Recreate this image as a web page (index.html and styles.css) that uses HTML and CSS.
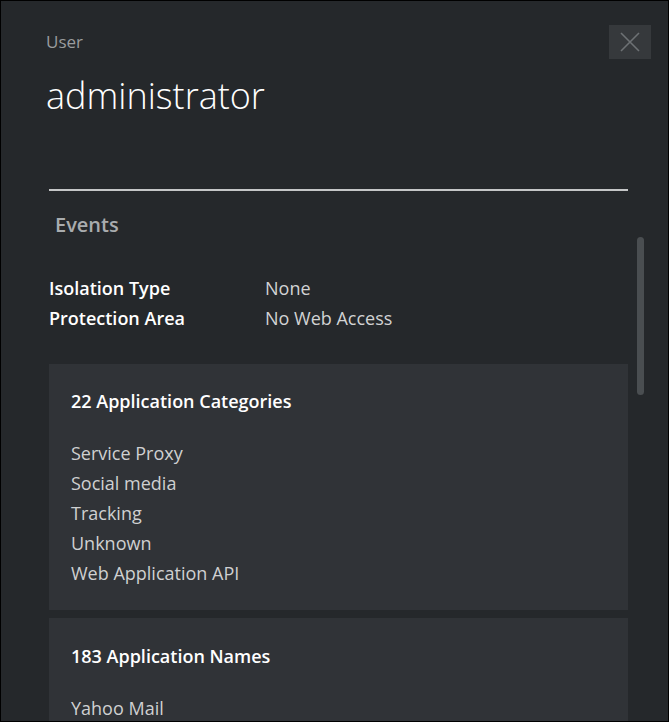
FILE: index.html
```html
<!DOCTYPE html>
<html lang="en">
<head>
<meta charset="utf-8">
<title>User administrator</title>
<link rel="stylesheet" href="styles.css">
</head>
<body>
<div class="panel">
  <header class="header">
    <div class="header-text">
      <div class="kicker">User</div>
      <h1 class="title">administrator</h1>
    </div>
    <button class="close" aria-label="Close">
      <svg width="20" height="20" viewBox="0 0 20 20"><path d="M1 1 L19 19 M19 1 L1 19" stroke="#6d7174" stroke-width="1.6" fill="none"/></svg>
    </button>
  </header>
  <div class="divider"></div>
  <div class="body">
    <div class="content">
      <h2 class="section">Events</h2>
      <dl class="props">
        <div class="prop"><dt>Isolation Type</dt><dd>None</dd></div>
        <div class="prop"><dt>Protection Area</dt><dd>No Web Access</dd></div>
      </dl>
      <section class="card">
        <h3 class="card-title">22 Application Categories</h3>
        <ul class="list">
          <li>Service Proxy</li>
          <li>Social media</li>
          <li>Tracking</li>
          <li>Unknown</li>
          <li>Web Application API</li>
        </ul>
      </section>
      <section class="card">
        <h3 class="card-title">183 Application Names</h3>
        <ul class="list">
          <li>Yahoo Mail</li>
        </ul>
      </section>
    </div>
    <div class="scrollbar"><div class="thumb"></div></div>
  </div>
</div>
</body>
</html>
```

FILE: styles.css
```css
* { box-sizing: border-box; }
html, body { margin: 0; padding: 0; background: #25282b; }
body { font-family: "Open Sans", "Noto Sans", sans-serif; }

.panel {
  width: 669px;
  height: 722px;
  border: 1px solid #000;
  background: #25282b;
  overflow: hidden;
  display: flex;
  flex-direction: column;
}
.panel > * { flex: none; }

.header {
  display: flex;
  justify-content: space-between;
  align-items: flex-start;
  padding: 24px 17px 0 45px;
}
.header-text { padding-top: 5px; }
.kicker {
  font-size: 17px;
  line-height: 24px;
  color: #9a9c9e;
}
.title {
  margin: 20px 0 0 0;
  font-size: 36px;
  line-height: 44px;
  font-weight: 300;
  color: #ffffff;
}
.close {
  width: 42px;
  height: 34px;
  border: 0;
  padding: 0;
  background: #36393c;
  display: flex;
  align-items: center;
  justify-content: center;
}

.divider {
  margin: 71px 0 0 48px;
  width: 579px;
  height: 2px;
  background: #c5c6c7;
}

.body {
  display: flex;
  align-items: flex-start;
  padding-left: 48px;
}
.content { width: 579px; flex: none; }

.section {
  margin: 20px 0 0 6px;
  font-size: 20px;
  line-height: 28px;
  font-weight: 600;
  color: #a9acae;
}

.props { margin: 34px 0 0 0; }
.prop { display: flex; }
.prop dt {
  width: 216px;
  font-size: 18px;
  line-height: 30px;
  font-weight: 600;
  color: #ffffff;
}
.prop dd {
  margin: 0;
  font-size: 18px;
  line-height: 30px;
  color: #d2d3d4;
}

.card {
  margin-top: 31px;
  background: #303337;
  padding: 24px 22px 22px 22px;
}
.card + .card { margin-top: 8px; padding-top: 25px; }
.card-title {
  margin: 0;
  font-size: 18px;
  line-height: 26px;
  font-weight: 600;
  color: #ffffff;
}
.list {
  list-style: none;
  margin: 24px 0 0 0;
  padding: 0;
}
.list li {
  font-size: 18px;
  line-height: 30px;
  color: #cfd0d1;
}

.scrollbar {
  margin-left: 9px;
  padding-top: 46px;
}
.thumb {
  width: 7px;
  height: 158px;
  border-radius: 4px;
  background: #4a4e51;
}
```
